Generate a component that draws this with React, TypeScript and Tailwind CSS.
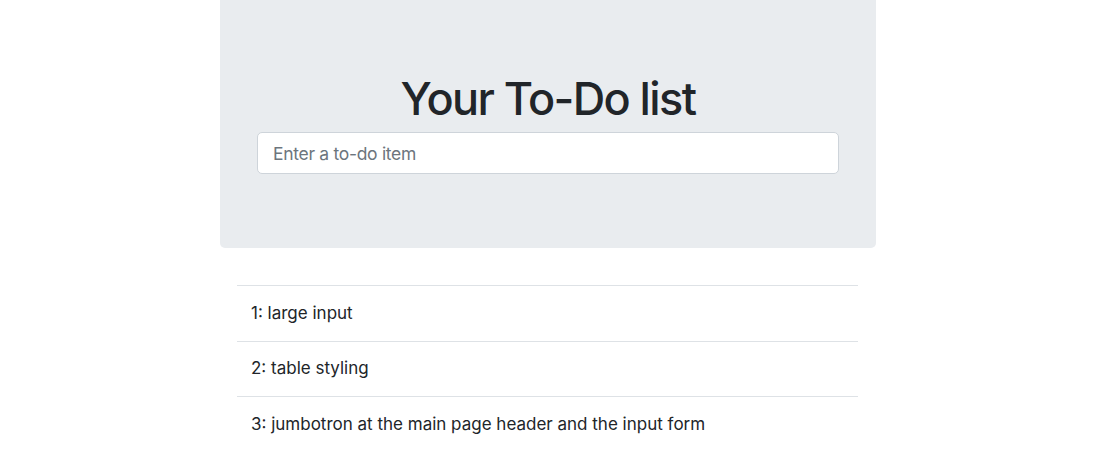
import React from "react";

const items = [
  "1: large input",
  "2: table styling",
  "3: jumbotron at the main page header and the input form",
];

export default function App() {
  return (
    <div className="min-h-[471px] w-full bg-white text-[#212529] [font-family:Inter,'Liberation_Sans',sans-serif]">
      <div className="ml-[220px] w-[656px] h-[248px] bg-[#e9ecef] rounded-b-[5px] flex flex-col items-center pt-[71px]">
        <h1 className="text-[45px] leading-[56px] font-medium tracking-[-1.6px]">Your To-Do list</h1>
        <input
          className="mt-[5px] w-[582px] h-[42px] bg-white border border-[#ced4da] rounded-[5px] px-[15px] text-[17.5px] tracking-[-0.3px] outline-none placeholder:text-[#6c757d]"
          placeholder="Enter a to-do item"
        />
      </div>
      <div className="ml-[237px] w-[621px] mt-[37px]">
        {items.map((t) => (
          <div key={t} className="border-t border-[#dee2e6] h-[55.5px] flex items-center px-[14px] text-[17px]">
            {t}
          </div>
        ))}
      </div>
    </div>
  );
}
